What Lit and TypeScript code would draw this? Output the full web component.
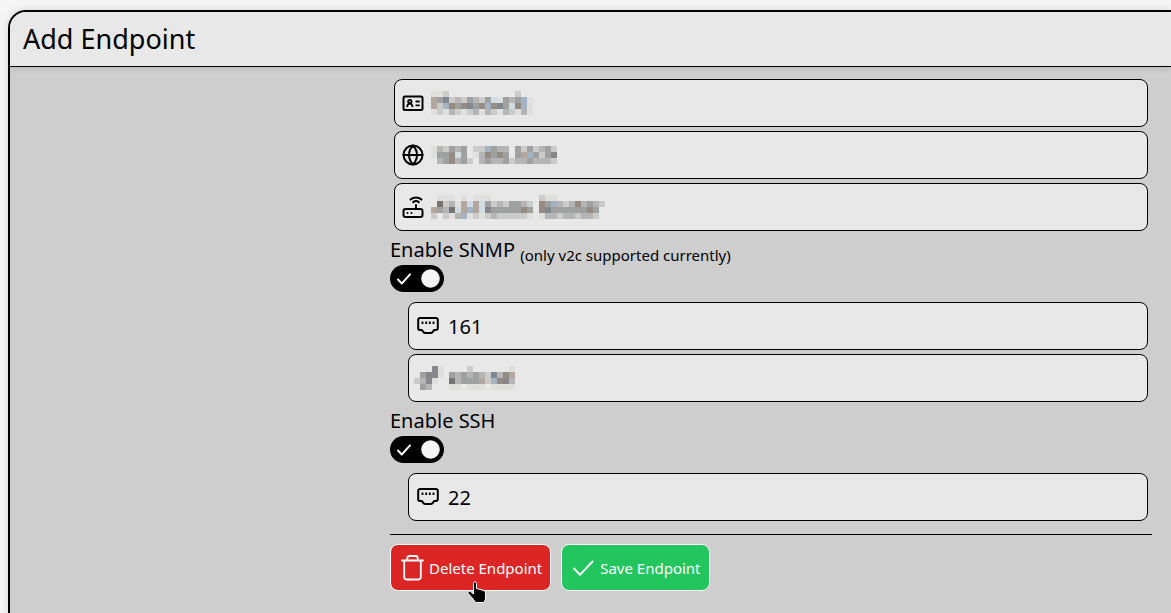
import { LitElement, html, svg, css } from "lit";
import { customElement, property } from "lit/decorators.js";

const SHADES: Record<string, string> = {
  a: "#dfdfde",
  b: "#cbcbca",
  c: "#b4b5b4",
  d: "#9fa0a0",
  e: "#88868a",
  f: "#757473",
  g: "#a4b3c3",
  h: "#d0dce3",
  i: "#b2a69e",
  j: "#968b80",
  k: "#7e8891",
};

const MASKS: Record<string, string[]> = {
  name: [
    "aab...........b..",
    "idkbcbdcbdhadcdga",
    "ibgjdjkdjgjkdhjga",
    "abacbabcacbacbaca",
  ],
  address: [
    "acbdcd.bbgdcc.dbdbcdb",
    "addjhd.acjdjd.digdbde",
    ".cdjcdb.cdccdbccdcccb",
  ],
  kind: [
    ".aaa.a.aaa........baa........",
    ".fbcaihihdbcbddcb.jdgcbcjcdcb",
    "idcfhigihedddddjd.jkddddddjd.",
    "b.bacgababcbbbbba.accbccbccb.",
  ],
  community: ["...b......a", "dcdcdcbkcji", "fcdddibgjec", "aa.aaa.aaaa"],
  key: ["...ea", ".deea", "bcea.", ".dc.."],
};

@customElement("pixel-mask")
export class PixelMask extends LitElement {
  @property() name = "";

  static styles = css`
    :host { display: block; flex: none; }
    svg { display: block; }
  `;

  render() {
    const rows = MASKS[this.name] ?? [];
    const w = Math.max(...rows.map((r) => r.length)) * 6;
    const h = rows.length * 6;
    return html`<svg width=${w} height=${h} shape-rendering="crispEdges" aria-hidden="true">
      ${rows.map((row, y) =>
        [...row].map((c, x) =>
          c === "." ? null : svg`<rect x=${x * 6} y=${y * 6} width="6" height="6" fill=${SHADES[c]}></rect>`
        )
      )}
    </svg>`;
  }
}

const icon = (body: unknown) => html`<svg class="icon" width="24" height="24" viewBox="0 0 24 24" fill="none"
  stroke="currentColor" stroke-width="2" stroke-linecap="round" stroke-linejoin="round" aria-hidden="true">${body}</svg>`;

const idCard = icon(svg`
  <rect x="2.500" y="5.500" width="19" height="13.500" rx="1.500"></rect>
  <circle cx="8.800" cy="10.500" r="1.700" stroke-width="1.800"></circle>
  <path d="M6.200 15.300c.3-1.800 1.300-2.700 2.600-2.700s2.300.9 2.600 2.700M15.300 10.500h2.700M15.300 14.300h2.700" stroke-width="1.800"></path>`);
const globe = icon(svg`
  <circle cx="12" cy="12" r="9.500"></circle>
  <path d="M2.500 12h19M12 2.500c-5.300 5.500-5.300 13.500 0 19M12 2.500c5.300 5.500 5.300 13.500 0 19"></path>`);
const router = icon(svg`
  <rect x="2.500" y="14" width="19" height="8" rx="2"></rect>
  <path d="M6.500 18h.01M10.500 18h.01M15 14v-4M12.200 7.200a4 4 0 0 1 5.600 0M9.500 4.600a8 8 0 0 1 11 0"></path>`);
const port = icon(svg`
  <path d="M4 4h16a1.800 1.800 0 0 1 1.800 1.800v8.400a1.800 1.800 0 0 1-1.800 1.800h-1.700l-2.200 2.500a1.600 1.600 0 0 1-1.200.5H9.100a1.600 1.600 0 0 1-1.200-.5l-2.200-2.500H4a1.800 1.800 0 0 1-1.800-1.800V5.800A1.800 1.800 0 0 1 4 4z"></path>
  <path d="M6.500 7.500v2.500M10.200 7.500v2.500M13.800 7.500v2.500M17.500 7.500v2.500" stroke-linecap="butt" stroke-width="1.800"></path>`);

@customElement("app-root")
export class AppRoot extends LitElement {
  static styles = css`
    :host {
      display: block;
      min-height: 100vh;
      box-sizing: border-box;
      padding: 10px 0 0 8px;
      overflow: hidden;
      background: #f5f5f5;
      color: #000;
      font: 20px/28px "Noto Sans", sans-serif;
    }
    * { box-sizing: border-box; }
    .panel {
      min-height: calc(100vh - 10px);
      border: 2px solid #000;
      border-width: 2px 0 0 2px;
      border-radius: 18px 0 0 0;
      background: #cecece;
      box-shadow: 0 0 10px rgba(0, 0, 0, 0.12);
      overflow: hidden;
    }
    header {
      padding: 8px 13px;
      background: #e8e8e8;
      border-bottom: 1px solid #000;
      box-shadow: 0 1px 6px rgba(0, 0, 0, 0.12);
    }
    h1 { margin: 0; font-size: 27px; line-height: 38px; font-weight: 400; }
    form {
      display: grid;
      grid-template-columns: minmax(0, 1fr) minmax(0, 2fr);
      column-gap: 2px;
      padding: 12px 19px 20px 0;
    }
    .fields { grid-column: 2; margin-left: -2px; }
    .stack { display: grid; gap: 4px; padding: 0 4px; }
    .nested { padding-left: 18px; }
    .field {
      display: flex;
      align-items: center;
      height: 48px;
      padding-left: 6px;
      border: 1px solid #000;
      border-radius: 8px;
      background: #e8e8e8;
    }
    .icon { display: block; flex: none; }
    .field .icon { margin-right: 6px; }
    .nested .field { padding-left: 7px; }
    .key { margin: 0 5px 0 -2px; }
    input.text {
      flex: 1;
      min-width: 0;
      height: 100%;
      padding: 0;
      border: 0;
      outline: 0;
      background: none;
      color: inherit;
      font: inherit;
    }
    .port input.text { padding-left: 2px; }
    .group { padding: 5px 0 10px; }
    .group label { display: block; height: 29px; white-space: nowrap; }
    .note { font-size: 15px; position: relative; top: 4px; }
    .switch { position: relative; display: block; width: 54px; height: 27px; }
    .switch input {
      display: block;
      appearance: none;
      width: 54px;
      height: 27px;
      margin: 0;
      border-radius: 14px;
      background: #000;
    }
    .switch svg { position: absolute; inset: 0; pointer-events: none; }
    .switch input:not(:checked) + svg { transform: scaleX(-1); }
    .actions {
      display: flex;
      gap: 10px;
      margin-top: 13px;
      padding-top: 9px;
      border-top: 1px solid #000;
    }
    button {
      position: relative;
      display: flex;
      align-items: center;
      height: 47px;
      padding: 0 8px;
      border: 1px solid #fff;
      border-radius: 8px;
      color: #fff;
      font: 15px/20px "Noto Sans", sans-serif;
      white-space: nowrap;
    }
    .delete { background: #dc2626; gap: 3px; }
    .save { background: #22c55e; gap: 4px; }
    .pointer { position: absolute; left: 76px; top: 36px; z-index: 1; }
  `;

  private toggle(id: string) {
    return html`<span class="switch"><input id=${id} type="checkbox" role="switch" checked />
      <svg width="54" height="27" viewBox="0 0 54 27" aria-hidden="true">
        <circle cx="40.500" cy="13.500" r="9.300" fill="#f5f5f5"></circle>
        <path d="M8 14.500l3.800 4L20 9.300" fill="none" stroke="#fff" stroke-width="1.900" stroke-linecap="round" stroke-linejoin="round"></path>
      </svg></span>`;
  }

  render() {
    return html`<main class="panel">
      <header><h1>Add Endpoint</h1></header>
      <form @submit=${(e: Event) => e.preventDefault()}>
        <div class="fields">
          <div class="stack">
            <div class="field">${idCard}<pixel-mask name="name"></pixel-mask><input class="text" aria-label="Name" /></div>
            <div class="field">${globe}<pixel-mask name="address"></pixel-mask><input class="text" aria-label="Address" /></div>
            <div class="field">${router}<pixel-mask name="kind"></pixel-mask><input class="text" aria-label="Device" /></div>
          </div>
          <div class="group">
            <label for="snmp">Enable SNMP <span class="note">(only v2c supported currently)</span></label>
            ${this.toggle("snmp")}
          </div>
          <div class="stack nested">
            <div class="field port">${port}<input class="text" aria-label="SNMP port" value="161" inputmode="numeric" /></div>
            <div class="field"><pixel-mask class="key" name="key"></pixel-mask><pixel-mask name="community"></pixel-mask><input class="text" aria-label="Community" /></div>
          </div>
          <div class="group">
            <label for="ssh">Enable SSH</label>
            ${this.toggle("ssh")}
          </div>
          <div class="stack nested">
            <div class="field port">${port}<input class="text" aria-label="SSH port" value="22" inputmode="numeric" /></div>
          </div>
          <div class="actions">
            <button class="delete" type="button">
              <svg width="27" height="30" viewBox="0 0 27 30" fill="none" stroke="#fff" stroke-width="1.800" stroke-linecap="round" stroke-linejoin="round" aria-hidden="true">
                <path d="M3 7.500h21M8.300 7.500V5.300a2.300 2.300 0 0 1 2.300-2.300h5.800a2.300 2.300 0 0 1 2.300 2.300v2.200M5.200 7.500v16.600a2.400 2.400 0 0 0 2.400 2.400h11.800a2.400 2.400 0 0 0 2.400-2.400V7.500"></path>
              </svg>
              <span>Delete Endpoint</span>
              <svg class="pointer" width="20" height="23" viewBox="0 0 20 23" aria-hidden="true">
                <path d="M6.500 2.500c0-2 3-2 3 0v5l6.500 1.700c1.700.4 2.500 1.300 2.500 3V18l-1.300 3.500H8.500L6 18l-4.700-5.500c-1.200-1.500.8-3 2.300-1.900L6.500 13z" fill="#000" stroke="#fff" stroke-width="1"></path>
              </svg>
            </button>
            <button class="save" type="submit">
              <svg width="26" height="26" viewBox="0 0 26 26" fill="none" stroke="#fff" stroke-width="1.900" stroke-linecap="round" stroke-linejoin="round" aria-hidden="true">
                <path d="M4 13.500l6 6.300L22.500 6.500"></path>
              </svg>
              <span>Save Endpoint</span>
            </button>
          </div>
        </div>
      </form>
    </main>`;
  }
}
